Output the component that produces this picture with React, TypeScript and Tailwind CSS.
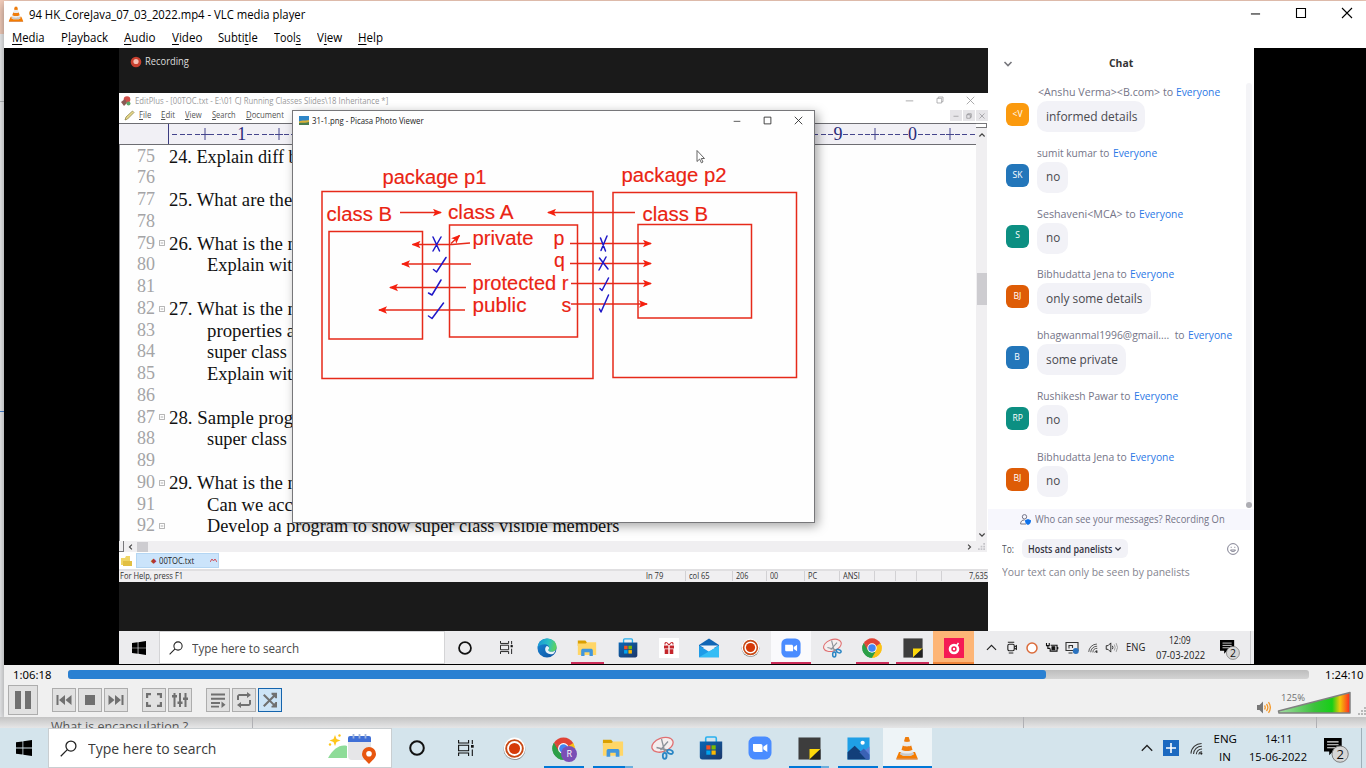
import { useLayoutEffect, useRef, useState } from "react";
import type { ReactNode } from "react";

/* Text condensed or widened to an exact advance width. */
function Fit({ w, className = "", children }: { w: number; className?: string; children: ReactNode }) {
  const ref = useRef<HTMLSpanElement>(null);
  const [scale, setScale] = useState(1);
  useLayoutEffect(() => {
    if (ref.current) setScale(w / ref.current.offsetWidth);
  }, [w]);
  return (
    <span className={`inline-block shrink-0 whitespace-pre ${className}`} style={{ width: w }}>
      <span ref={ref} className="inline-block origin-left" style={{ transform: `scaleX(${scale})` }}>
        {children}
      </span>
    </span>
  );
}

/* ---------- icons ---------- */

const Cone = ({ className }: { className: string }) => (
  <svg viewBox="0 0 24 24" className={className}>
    <path d="M4 16h16l2.700 6.500H1.300z" fill="#f57c00" />
    <path d="M1.300 22.500h21.400v1H1.300z" fill="#d35f00" />
    <path d="M10.300 1h3.400l5 17.200c-2 2.400-11.400 2.400-13.400 0z" fill="#ececec" />
    <path d="M10.300 1h3.400l1.300 4.300c-1.200.8-4.800.8-6 0z" fill="#ef7d0c" />
    <path d="M7.800 9.600c2 1.200 6.400 1.200 8.400 0l1.300 4.200c-2.600 1.700-8.400 1.700-11 0z" fill="#ef7d0c" />
    <path d="M5.900 16.300l-.6 1.900c2 2.400 11.400 2.400 13.400 0l-.6-1.900c-2.500 1.700-9.700 1.700-12.200 0z" fill="#c9c9c9" />
  </svg>
);

const WinLogo = ({ className }: { className: string }) => (
  <svg viewBox="0 0 16 16" className={className} fill="#000">
    <path d="M0 2.300l6.500-.9v6.200H0zM7.300 1.300L16 0v7.600H7.300zM0 8.400h6.500v6.200L0 13.700zM7.300 8.400H16V16l-8.700-1.300z" />
  </svg>
);

const SearchIcon = ({ className }: { className: string }) => (
  <svg viewBox="0 0 16 16" className={className} fill="none" stroke="#222" strokeWidth="1.200">
    <circle cx="10.300" cy="5.700" r="4.700" />
    <path d="M6.900 9.100L.7 15.300" />
  </svg>
);

const Ring = ({ className }: { className: string }) => (
  <svg viewBox="0 0 16 16" className={className} fill="none" stroke="#111" strokeWidth="2">
    <circle cx="8" cy="8" r="6.800" />
  </svg>
);

const TaskView = ({ className }: { className: string }) => (
  <svg viewBox="0 0 16 16" className={className} fill="none" stroke="#111" strokeWidth="1.100">
    <path d="M.6 0v3h10V0M.6 16v-3h10v3M.6 5.200h10v5.600H.6zM14.300 0v4M14.300 9.500V16" />
    <path d="M13 5h2.700v2.700H13z" fill="#111" stroke="none" />
  </svg>
);

const Edge = ({ className }: { className: string }) => (
  <svg viewBox="0 0 24 24" className={className}>
    <defs>
      <linearGradient id="edgeTop" x1="0" x2="1" y1=".3" y2=".5">
        <stop offset="0" stopColor="#1795d8" />
        <stop offset=".55" stopColor="#2bc0c4" />
        <stop offset="1" stopColor="#5fd35a" />
      </linearGradient>
      <linearGradient id="edgeLow" x1="0" x2="1" y1="0" y2="1">
        <stop offset="0" stopColor="#1b8ad8" />
        <stop offset="1" stopColor="#0c4f9e" />
      </linearGradient>
    </defs>
    <circle cx="12" cy="12" r="11.500" fill="url(#edgeLow)" />
    <path d="M.7 11C1.500 4.500 6.500.5 12.200.5 19 .5 23.500 5.200 23.500 10.500c0 3.700-2.500 6-6 6-2.800 0-4-1.200-4-2.200 0-.8 1-1.200 1-2.800 0-2.300-2-4-5-4C5 7.500 1.500 9.500.7 11z" fill="url(#edgeTop)" />
    <path d="M13.500 14.300c0 1 1.200 2.200 4 2.200 2 0 3.800-.8 4.800-1.800-.4 1.500-1.300 3-2.500 4.200-5 2-10.300-1-10-5.600.1-1.500.9-2.800 2-3.600 1.600.3 2.600 1.200 2.700 2.500 0 1-1 1.300-1 2.100z" fill="#e8f2f8" />
  </svg>
);

const Folder = ({ className }: { className: string }) => (
  <svg viewBox="0 0 24 24" className={className}>
    <path d="M1 3h9l2 2.500v4H1z" fill="#dba000" />
    <path d="M1 6.500h9.500L12.500 5H23v15.500H1z" fill="#ffd667" />
    <path d="M5 21.500V15.300C5 13.500 6 13 7.500 13h9c1.500 0 2.500.5 2.500 2.300v6.200h-4v-4.300H9v4.300z" fill="#4196dc" />
  </svg>
);

const Store = ({ className }: { className: string }) => (
  <svg viewBox="0 0 24 24" className={className}>
    <defs>
      <linearGradient id="storeBody" x1="0" x2="1" y1="0" y2="1">
        <stop offset="0" stopColor="#0a66b5" />
        <stop offset="1" stopColor="#1d3769" />
      </linearGradient>
    </defs>
    <path d="M6.700 7V2.500C6.700 1.500 7.200 1 8 1h8c.8 0 1.300.5 1.300 1.500V7" fill="none" stroke="#29b0ee" strokeWidth="1.600" />
    <path d="M.8 5.500h22.400v15.300c0 1.700-.9 2.600-2.600 2.600H3.400c-1.700 0-2.600-.9-2.600-2.600z" fill="url(#storeBody)" />
    <path d="M7.300 9.300h4.200v4.200H7.300z" fill="#f25022" />
    <path d="M12.500 9.300h4.200v4.200h-4.200z" fill="#7fba00" />
    <path d="M7.300 14.500h4.200v4.200H7.300z" fill="#00a4ef" />
    <path d="M12.500 14.500h4.200v4.200h-4.200z" fill="#ffb900" />
  </svg>
);

const Gift = ({ className }: { className: string }) => (
  <svg viewBox="0 0 20 20" className={className}>
    <path d="M0 0h20v20H0z" fill="#fff" />
    <path d="M5 7.500h4.300v3H5zM10.700 7.500H15v3h-4.300zM5.700 11.200h3.600v4.800H5.700zM10.700 11.200h3.600v4.800h-3.600z" fill="#c4252b" />
    <path d="M9.800 7C8 3.500 5.500 4 6.200 6.500M10.200 7c1.800-3.500 4.300-3 3.600-.5" fill="none" stroke="#c4252b" strokeWidth="1.200" />
  </svg>
);

const Mail = ({ className }: { className: string }) => (
  <svg viewBox="0 0 24 24" className={className}>
    <path d="M0 8.500L12 .5l12 8V12H0z" fill="#1066b5" />
    <path d="M0 9l12 7.500L24 9v14H0z" fill="#1f9ce8" />
    <path d="M24 9L0 23h24z" fill="#35bdf5" />
    <path d="M1 9h22l-11 6.500z" fill="#eef4f9" />
  </svg>
);

const Rec = ({ className }: { className: string }) => (
  <svg viewBox="0 0 24 24" className={className}>
    <circle cx="12" cy="12.500" r="11.300" fill="#777" />
    <circle cx="12" cy="11.800" r="11.200" fill="#fff" />
    <circle cx="12" cy="12" r="8.700" fill="#fff" stroke="#c84a16" strokeWidth="2" />
    <circle cx="12" cy="12" r="5.800" fill="#d63a08" />
  </svg>
);

const Zoom = ({ className }: { className: string }) => (
  <svg viewBox="0 0 24 24" className={className}>
    <rect x=".5" y=".5" width="23" height="23" rx="6.500" fill="#4a8cff" />
    <path d="M5 8h7.500c1.300 0 2 .7 2 2v6H7c-1.300 0-2-.7-2-2z" fill="#fff" />
    <path d="M15.300 10.800L19.300 8v8l-4-2.800z" fill="#fff" />
  </svg>
);

const Snip = ({ className }: { className: string }) => (
  <svg viewBox="0 0 24 24" className={className} fill="none">
    <ellipse cx="12.500" cy="8.800" rx="11" ry="6.800" transform="rotate(-20 12.500 8.800)" fill="#f4eeee" stroke="#e07072" strokeWidth="1.300" />
    <path d="M11.500 3l3.300 13M6.500 11.500l10.500 2.500M18 5.500L10.500 14" stroke="#8c9299" strokeWidth="1.300" />
    <ellipse cx="14.700" cy="19.800" rx="1.900" ry="3" stroke="#2b86c4" strokeWidth="1.800" />
    <ellipse cx="20" cy="15.800" rx="3" ry="1.900" transform="rotate(20 20 15.800)" stroke="#2b86c4" strokeWidth="1.800" />
  </svg>
);

const Chrome = ({ className }: { className: string }) => (
  <svg viewBox="0 0 24 24" className={className}>
    <path d="M12 12L1.900 6.200A11.700 11.700 0 0 1 22.100 6.200z" fill="#e04336" />
    <path d="M12 12L22.100 6.200A11.700 11.700 0 0 1 12 23.700z" fill="#fbc116" />
    <path d="M12 12V23.700A11.700 11.700 0 0 1 1.900 6.200z" fill="#2c9f47" />
    <path d="M12 6.400h10.200L17 14.800zM12 12l-5.200 2.700L1.900 6.200z" fill="#e04336" />
    <path d="M17.200 14.500L12 23.700l-2-7z" fill="#fbc116" />
    <path d="M17 9.500l5.200-3.100A11.700 11.700 0 0 1 12 23.700l5.200-9z" fill="#fbc116" />
    <path d="M7 14.800L1.900 6.200A11.700 11.700 0 0 0 12 23.700l4-7z" fill="#2c9f47" />
    <circle cx="12" cy="12" r="5.700" fill="#fff" />
    <circle cx="12" cy="12" r="4.500" fill="#4285f4" />
  </svg>
);

const Note = ({ className }: { className: string }) => (
  <svg viewBox="0 0 24 24" className={className}>
    <path d="M.5.5h23v23H.5z" fill="#3d3d3d" />
    <path d="M12 12.500h11.500L12 23.500z" fill="#fdd80a" />
    <path d="M23.500 12.500v11H12z" fill="#222" />
  </svg>
);

const RedDial = ({ className }: { className: string }) => (
  <svg viewBox="0 0 20 20" className={className}>
    <path d="M0 0h20v20H0z" fill="#f51a55" />
    <circle cx="10" cy="11" r="4" fill="none" stroke="#fff" strokeWidth="2.600" />
    <circle cx="10" cy="11" r="1.200" fill="#fff" />
    <path d="M12 8.500l2.500-3.500" stroke="#fff" strokeWidth="1.500" />
  </svg>
);

const Photo = ({ className }: { className: string }) => (
  <svg viewBox="0 0 24 24" className={className}>
    <path d="M.5.5h23v23H.5z" fill="#1f9fe6" />
    <path d="M23.500 10L15 17l8.500 6.500z" fill="#5f7fd6" />
    <path d="M.5 16L8 9l15 14.500H.5z" fill="#123f7a" />
    <path d="M13 16l4.500-4 6 6.500v5h-3.500z" fill="#3a62b5" />
    <circle cx="16.300" cy="6" r="2.200" fill="#fff" />
  </svg>
);

const ChevUp = ({ className }: { className: string }) => (
  <svg viewBox="0 0 12 8" className={className} fill="none" stroke="#222" strokeWidth="1.300">
    <path d="M.8 6.800L6 1.500l5.200 5.300" />
  </svg>
);

const ChevDown = ({ className }: { className: string }) => (
  <svg viewBox="0 0 10 8" className={className} fill="none" stroke="currentColor" strokeWidth="1.600">
    <path d="M1.500 2L5 5.500 8.500 2" />
  </svg>
);

const Wifi = ({ className }: { className: string }) => (
  <svg viewBox="0 0 14 14" className={className} fill="none" stroke="#333" strokeWidth="1.100">
    <path d="M1 12.500A11.500 11.500 0 0 1 12.500 1.500M3.800 13A8.700 8.700 0 0 1 12.800 4.500M6.800 13.200A6 6 0 0 1 13 7.500M9.500 13.500A3.500 3.500 0 0 1 13 10.500" />
    <circle cx="12.200" cy="12.500" r="1.200" fill="#222" stroke="none" />
  </svg>
);

const Notif = ({ className }: { className: string }) => (
  <svg viewBox="0 0 24 24" className={className}>
    <path d="M0 0h17v13H8.500L5 16.500V13H0z" fill="#000" />
    <path d="M3 3.700h11M3 6.500h11M3 9.300h11" stroke="#e8e8e8" strokeWidth="1" />
    <circle cx="15.500" cy="15.500" r="7.800" fill="#d6d6d6" stroke="#777" strokeWidth=".9" />
    <text x="15.500" y="20" fontSize="12.500" textAnchor="middle" fontFamily="Open Sans, sans-serif" fill="#111">2</text>
  </svg>
);

const WinControls = ({ kind, className }: { kind: "min" | "max" | "close" | "restore"; className: string }) => (
  <svg viewBox="0 0 12 12" className={className} fill="none" stroke="currentColor" strokeWidth="1.100">
    {kind === "min" && <path d="M1 6.500h10" />}
    {kind === "max" && <path d="M1.500 1.500h9v9h-9z" />}
    {kind === "close" && <path d="M1 1l10 10M11 1L1 11" />}
    {kind === "restore" && <path d="M1.500 3.500h7v7h-7zM3.500 3.500v-2h7v7h-2" />}
  </svg>
);

/* ---------- player window chrome ---------- */

const MENU: [string, string, string, number][] = [
  ["", "M", "edia", 33],
  ["P", "l", "ayback", 47],
  ["", "A", "udio", 32],
  ["", "V", "ideo", 30],
  ["Subti", "t", "le", 40],
  ["Tool", "s", "", 27],
  ["V", "i", "ew", 25],
  ["", "H", "elp", 25],
];

function TitleBar() {
  return (
    <>
      <div className="flex h-[27px] shrink-0 items-center bg-white pl-[4px] text-black">
        <Cone className="mt-[-2px] size-[16px]" />
        <Fit w={276} className="ml-[5px] text-[12px] leading-[16px]">94 HK_CoreJava_07_03_2022.mp4 - VLC media player</Fit>
        <div className="mt-[-3px] ml-auto flex items-center gap-[34px] pr-[13px]">
          <WinControls kind="min" className="size-[11px]" />
          <WinControls kind="max" className="size-[12px]" />
          <WinControls kind="close" className="size-[12px]" />
        </div>
      </div>
      <div className="flex h-[20px] shrink-0 items-center gap-[16px] bg-white pl-[8px] text-[12px] leading-[16px] text-black">
        {MENU.map(([a, u, b, w]) => (
          <Fit key={a + u + b} w={w}>
            {a}
            <span className="underline underline-offset-2">{u}</span>
            {b}
          </Fit>
        ))}
      </div>
    </>
  );
}

/* ---------- EditPlus ---------- */

const LINES: { n: number; fold?: boolean; indent?: boolean; text?: string; w?: number }[] = [
  { n: 75, text: "24. Explain diff b", w: 129 },
  { n: 76 },
  { n: 77, text: "25. What are the", w: 123 },
  { n: 78 },
  { n: 79, fold: true, text: "26. What is the n", w: 128 },
  { n: 80, indent: true, text: "Explain with", w: 95 },
  { n: 81 },
  { n: 82, fold: true, text: "27. What is the n", w: 128 },
  { n: 83, indent: true, text: "properties a", w: 88 },
  { n: 84, indent: true, text: "super class", w: 80 },
  { n: 85, indent: true, text: "Explain with", w: 95 },
  { n: 86 },
  { n: 87, fold: true, text: "28. Sample progr", w: 130 },
  { n: 88, indent: true, text: "super class", w: 80 },
  { n: 89 },
  { n: 90, fold: true, text: "29. What is the n", w: 128 },
  { n: 91, indent: true, text: "Can we acce", w: 94 },
  { n: 92, fold: true, indent: true, text: "Develop a program to show super class visible members", w: 412 },
];

/* Column marks; the stretch behind the photo window stays plain. */
const RULER = Array.from({ length: 108 }, (_, i) => {
  const c = i + 1;
  if (c > 18 && c < 87) return "-";
  return c % 10 === 0 ? String((c / 10) % 10) : c % 5 === 0 ? "+" : "-";
});

function Ruler() {
  return (
    <div className="flex h-[22px] shrink-0 overflow-hidden border-y border-[#6d6d72] bg-[#f1f0f5]">
      <div className="w-[50px] shrink-0 border-r border-[#3c3c80]" />
      <div className="flex min-w-0 flex-1 items-center overflow-hidden pl-[2px] font-['Liberation_Serif',serif] text-[18px] leading-[20px] text-[#2a2a78]">
        {RULER.map((ch, i) => (
          <span key={i} className="flex w-[7.46px] shrink-0 items-center justify-center">
            {ch === "-" && <span className="h-px w-[5px] bg-[#45458c]" />}
            {ch === "+" && (
              <svg viewBox="0 0 8 12" className="h-[12px] w-[8px] shrink-0" stroke="#45458c" strokeWidth="1">
                <path d="M0 6.500h8M4 0v12" />
              </svg>
            )}
            {ch !== "-" && ch !== "+" && <span>{ch}</span>}
          </span>
        ))}
      </div>
    </div>
  );
}

function Diagram() {
  return (
    <svg viewBox="293 131 521 391" className="block h-[391px] w-[521px]" fill="none">
      <defs>
        <marker id="tip" viewBox="0 0 9 8" refX="8" refY="4" markerWidth="9" markerHeight="8" markerUnits="userSpaceOnUse" orient="auto">
          <path d="M0 0.300L9 4 0 7.700 2 4z" fill="#f5200f" />
        </marker>
      </defs>
      <g stroke="#e62a1a" strokeWidth="1.500">
        <path d="M322 191.500h271v187H322zM329 231.500h93.500V339H329zM449.500 225h128v112h-128zM613 192.500h183.500v185H613zM638 224.500h113.500V318H638z" />
        <path d="M400 212.500h41" markerEnd="url(#tip)" />
        <path d="M635 212.500h-87" markerEnd="url(#tip)" />
        <path d="M570 243.500h81" markerEnd="url(#tip)" />
        <path d="M570 263.500h81" markerEnd="url(#tip)" />
        <path d="M571 283.500h80" markerEnd="url(#tip)" />
        <path d="M571 304h76" markerEnd="url(#tip)" />
        <path d="M470 243L452 244.500H412.500" markerEnd="url(#tip)" />
        <path d="M451 243.500l8.500-8" markerEnd="url(#tip)" />
        <path d="M471 264h-69" markerEnd="url(#tip)" />
        <path d="M466 287.500h-76" markerEnd="url(#tip)" />
        <path d="M465 310h-86" markerEnd="url(#tip)" />
      </g>
      <g stroke="#2018c8" strokeWidth="1.500" strokeLinecap="round" strokeLinejoin="round">
        <path d="M433 237l6.500 14M441 237l-8 14M433.500 269.500l3 2.500 9.500-14.500M428.500 293l3.500 2 9-15M428.500 316l3.500 2.500 11.500-15.500" />
        <path d="M600.500 238l5 13M607 236l-6 14.500M599.500 258l8.500 11M606 257l-7 13M600 288.500l2 2 6.500-12.500M599.500 309l1.500 3 7.500-17" />
      </g>
      <g fill="#ea2413" stroke="#ea2413" strokeWidth=".15" fontFamily="'Liberation Sans', sans-serif" fontSize="19.500">
        <text x="382.500" y="184" textLength="104" lengthAdjust="spacingAndGlyphs">package p1</text>
        <text x="621.500" y="181.500" textLength="105" lengthAdjust="spacingAndGlyphs">package p2</text>
        <text x="326.500" y="221" textLength="65.500" lengthAdjust="spacingAndGlyphs">class B</text>
        <text x="448" y="219.300" textLength="65.500" lengthAdjust="spacingAndGlyphs">class A</text>
        <text x="642.500" y="221" textLength="65.500" lengthAdjust="spacingAndGlyphs">class B</text>
        <text x="472.500" y="244.500" textLength="61" lengthAdjust="spacingAndGlyphs">private</text>
        <text x="553.500" y="244.500">p</text>
        <text x="554" y="267">q</text>
        <text x="472.500" y="289.500" textLength="96" lengthAdjust="spacingAndGlyphs">protected r</text>
        <text x="472.500" y="312" textLength="54" lengthAdjust="spacingAndGlyphs">public</text>
        <text x="561.500" y="312">s</text>
      </g>
      <path d="M697 150.500v11l2.600-2.400 1.800 3.700 1.600-.8-1.700-3.500h3.200z" fill="#fff" stroke="#555" strokeWidth=".9" />
    </svg>
  );
}

function PhotoViewer() {
  return (
    <div className="absolute top-[17px] left-[173px] flex h-[413px] w-[523px] flex-col border border-[#77777a] bg-[#fefefe] shadow-[3px_3px_10px_rgba(0,0,0,0.35)]">
      <div className="flex h-[20px] shrink-0 items-center pb-px pl-[6px] text-[#222]">
        <svg viewBox="0 0 10 9" className="h-[9px] w-[10px]">
          <path d="M0 0h10v9H0z" fill="#2e86c8" />
          <path d="M0 5.500C3 3.500 7 5 10 4v5H0z" fill="#d9b23a" />
          <path d="M0 7c4-1 6 .5 10-1v3H0z" fill="#4a7d50" />
        </svg>
        <Fit w={112} className="ml-[3px] text-[9px] leading-[12px]">31-1.png - Picasa Photo Viewer</Fit>
        <div className="ml-auto flex items-center gap-[22px] pr-[11px]">
          <WinControls kind="min" className="size-[8px]" />
          <WinControls kind="max" className="size-[9px]" />
          <WinControls kind="close" className="size-[9px]" />
        </div>
      </div>
      <Diagram />
    </div>
  );
}

const STATUS: [string, number, number][] = [
  ["ln 79", 17, 43],
  ["col 65", 21, 47],
  ["206", 12, 34],
  ["00", 8, 38],
  ["PC", 9, 35],
  ["ANSI", 17, 35],
  ["", 0, 21],
  ["", 0, 21],
  ["", 0, 25],
];

function EditPlus() {
  return (
    <div className="relative flex h-[489px] shrink-0 flex-col bg-white">
      <div className="flex h-[15px] shrink-0 items-center pl-[2px] text-[#9a9a9c]">
        <svg viewBox="0 0 10 10" className="size-[10px]">
          <circle cx="6" cy="3.500" r="3.300" fill="#d2504a" />
          <path d="M0 6l4-3 2 4-3 3z" fill="#8a5a55" />
          <circle cx="7.500" cy="7.500" r="2" fill="#5ea86a" />
        </svg>
        <Fit w={253} className="ml-[4px] text-[9px] leading-[12px]">EditPlus - [00TOC.txt - E:\01 CJ Running Classes Slides\18 Inheritance *]</Fit>
        <div className="mt-[-1px] ml-auto flex items-center gap-[22px] pr-[13px]">
          <WinControls kind="min" className="size-[9px]" />
          <WinControls kind="restore" className="size-[8px]" />
          <WinControls kind="close" className="size-[9px]" />
        </div>
      </div>
      <div className="flex h-[15px] shrink-0 items-center pl-[5px] text-[9px] leading-[12px] text-[#555]">
        <svg viewBox="0 0 11 11" className="size-[11px]">
          <path d="M1 10l1-3 6.500-6L10 2.500 3.500 9z" fill="#e6d98c" stroke="#877a3a" strokeWidth=".7" />
        </svg>
        <div className="mt-[-1px] flex gap-[10px] pl-[4px]">
          {([["F", "ile", 12], ["E", "dit", 14], ["V", "iew", 17], ["S", "earch", 24], ["D", "ocument", 38]] as [string, string, number][]).map(([u, r, w]) => (
            <Fit key={u} w={w}>
              <span className="underline">{u}</span>
              {r}
            </Fit>
          ))}
        </div>
        <div className="ml-auto flex gap-px text-[#77777a]">
          {(["min", "restore", "close"] as const).map((k) => (
            <span key={k} className="flex h-[11px] w-[12px] items-center justify-center bg-[#e6e5e8]">
              <WinControls kind={k} className="size-[6px]" />
            </span>
          ))}
        </div>
      </div>
      <div className="flex h-[429px] shrink-0">
        <div className="flex w-[857px] shrink-0 flex-col">
          <Ruler />
          <div className="flex-1 overflow-hidden border-l border-[#88888c] bg-[#fefefe] pt-[0.5px] font-['Liberation_Serif',serif] text-[19px] leading-[21.760px] text-[#111]">
            {LINES.map((l) => (
              <div key={l.n} className="flex h-[21.760px] items-center">
                <Fit w={18} className="ml-[17px] text-[18px] text-[#a4a4a6]">{l.n}</Fit>
                <span className="flex w-[14px] shrink-0 items-center pl-[4px]">
                  {l.fold && (
                    <svg viewBox="0 0 7 7" className="size-[6px]" fill="none" stroke="#999" strokeWidth=".9">
                      <path d="M.5.500h6v6h-6zM2 3.500h3" />
                    </svg>
                  )}
                </span>
                <span className={l.indent ? "w-[38px] shrink-0" : "w-0 shrink-0"} />
                {l.text && <Fit w={l.w ?? 100}>{l.text}</Fit>}
              </div>
            ))}
          </div>
          <div className="flex h-[11px] shrink-0 items-center bg-[#f0eff1] text-[#444]">
            <span className="h-[11px] w-[5px] border-r border-b border-[#77777a]" />
            <ChevDown className="mr-[3px] ml-[3px] h-[6px] w-[7px] rotate-90" />
            <span className="h-[10px] w-[11px] bg-[#cdccd0]" />
            <ChevDown className="mr-[3px] ml-auto h-[6px] w-[7px] -rotate-90" />
          </div>
        </div>
        <div className="flex w-[11px] flex-col items-center bg-[#f0eff1] text-[#444]">
          <span className="h-[5px] w-full border-y border-r border-[#77777a] bg-white" />
          <ChevDown className="mt-[4px] h-[6px] w-[8px] rotate-180" />
          <span className="mt-[135px] h-[32px] w-[10px] bg-[#cdccd0]" />
          <ChevDown className="mt-auto h-[6px] w-[8px]" />
          <svg viewBox="0 0 8 8" className="mt-[5px] mb-[2px] size-[7px]" fill="#c4c4c8">
            <path d="M6 0h2v2H6zM3 3h2v2H3zM6 3h2v2H6zM0 6h2v2H0zM3 6h2v2H3zM6 6h2v2H6z" />
          </svg>
        </div>
      </div>
      <div className="flex h-[17px] shrink-0 items-start pt-px text-[9px] leading-[12px]">
        <svg viewBox="0 0 11 11" className="mt-[2px] ml-[2px] size-[11px]">
          <path d="M0 3h4l1-2h4v9H0z" fill="#efd565" />
          <path d="M2 6h9v5H2z" fill="#e2bf42" />
        </svg>
        <div className="ml-[4px] flex h-[15px] w-[83px] items-center border border-[#b4d6f3] bg-[#cbe4fb] pl-[14px] text-[#222]">
          <span className="text-[7px] text-[#b2382c]">◆</span>
          <Fit w={35} className="ml-[3px]">00TOC.txt</Fit>
          <svg viewBox="0 0 7 5" className="ml-[16px] h-[5px] w-[7px]" stroke="#d0505a" fill="none">
            <path d="M0 4l2-3 1.500 2L5 1l2 3" />
          </svg>
        </div>
      </div>
      <div className="flex h-[13px] shrink-0 items-center border-t-2 border-[#e0dfe1] bg-[#f0eff1] pb-px pl-px text-[9px] leading-[10px] text-[#333]">
        <Fit w={63}>For Help, press F1</Fit>
        <span className="w-[460px]" />
        {STATUS.map(([t, w, cell], i) => (
          <span key={i} className="flex h-full shrink-0 items-center border-r border-[#d2d1d4] pl-[3px]" style={{ width: cell }}>
            {t && <Fit w={w}>{t}</Fit>}
          </span>
        ))}
        <Fit w={19} className="ml-auto">7,635</Fit>
      </div>
      <PhotoViewer />
    </div>
  );
}

/* ---------- chat ---------- */

const CHAT: { av: string; c: string; from: string; fw: number; msg: string; mw: number }[] = [
  { av: "<V", c: "bg-[#fb9a0e]", from: "<Anshu Verma><B.com> to", fw: 135, msg: "informed details", mw: 91 },
  { av: "SK", c: "bg-[#2376ba]", from: "sumit kumar to", fw: 72.500, msg: "no", mw: 14 },
  { av: "S", c: "bg-[#0c8f82]", from: "Seshaveni<MCA> to", fw: 99, msg: "no", mw: 14 },
  { av: "BJ", c: "bg-[#de5c06]", from: "Bibhudatta Jena to", fw: 90, msg: "only some details", mw: 97 },
  { av: "B", c: "bg-[#2376ba]", from: "bhagwanmal1996@gmail....  to", fw: 148, msg: "some private", mw: 72 },
  { av: "RP", c: "bg-[#0c8f82]", from: "Rushikesh Pawar to", fw: 93.500, msg: "no", mw: 14 },
  { av: "BJ", c: "bg-[#de5c06]", from: "Bibhudatta Jena to", fw: 90, msg: "no", mw: 14 },
];

function Chat() {
  return (
    <div className="flex w-[266px] shrink-0 flex-col bg-white">
      <div className="flex h-[36px] shrink-0 items-center text-[#77777d]">
        <ChevDown className="mt-[-4px] ml-[15px] h-[8px] w-[10px]" />
        <Fit w={24.500} className="mt-[-6px] ml-[96px] text-[11px] leading-[16px] font-bold text-[#333]">Chat</Fit>
      </div>
      <div className="flex h-[425px] shrink-0">
        <div className="flex w-[258px] shrink-0 flex-col">
          {CHAT.map((m, i) => (
            <div key={i} className="flex h-[60.750px] shrink-0 pl-[18px]">
              <span className={`mt-[19px] flex size-[23px] shrink-0 items-center justify-center rounded-[6px] text-[9.500px] text-white ${m.c}`}>
                <span className="origin-center scale-x-90 pb-px">{m.av}</span>
              </span>
              <div className="ml-[8px] flex flex-col items-start">
                <div className="flex h-[17px] items-center gap-[3px] pb-px text-[10.500px] leading-[14px] text-[#747487]">
                  <Fit w={m.fw} className={i === 0 ? "ml-px" : ""}>{m.from}</Fit>
                  <Fit w={44} className="text-[#2b77e6]">Everyone</Fit>
                </div>
                <div className="flex h-[31px] items-center rounded-[10px] bg-[#f2f2f7] px-[8.500px] text-[12.500px] leading-[16px] text-[#4a4a50]">
                  <Fit w={m.mw}>{m.msg}</Fit>
                </div>
              </div>
            </div>
          ))}
        </div>
        <div className="mt-[-1px] flex h-[425px] w-[6px] flex-col justify-end rounded-full bg-[#f4f4f7]">
          <span className="size-[6px] rounded-full bg-[#adadb3]" />
        </div>
      </div>
      <div className="flex h-[21px] shrink-0 items-center bg-[#f7f7fd] pb-px pl-[32px] text-[10.500px] leading-[14px] text-[#747487]">
        <svg viewBox="0 0 11 11" className="mt-px size-[11px]" fill="none" stroke="#747487" strokeWidth="1">
          <circle cx="4.500" cy="2.800" r="2.200" />
          <path d="M6 10H.600c0-3 1.500-4 4-4" />
          <path d="M8 5l3 1.200c0 2.500-1 4-3 4.800-2-.8-3-2.300-3-4.800z" fill="#0e71eb" stroke="none" />
        </svg>
        <Fit w={190} className="ml-[4px]">Who can see your messages? Recording On</Fit>
      </div>
      <div className="mt-[9px] flex h-[19px] shrink-0 items-center pl-[14px] text-[10.500px] leading-[14px]">
        <Fit w={12} className="text-[#55555c]">To:</Fit>
        <div className="ml-[8px] flex h-[19px] w-[106px] items-center rounded-[6px] bg-[#f2f2f7] pl-[6px] text-[#333340]">
          <Fit w={84} className="text-[10px] font-semibold">Hosts and panelists</Fit>
          <ChevDown className="ml-[2px] h-[6px] w-[8px]" />
        </div>
        <svg viewBox="0 0 12 12" className="ml-[99px] size-[12px]" fill="none" stroke="#747487" strokeWidth=".9">
          <circle cx="6" cy="6" r="5.400" />
          <path d="M3.500 7c.6 2 4.400 2 5 0z" />
          <path d="M4.200 3.800v1M7.800 3.800v1" />
        </svg>
      </div>
      <div className="pt-[7px] pl-[14px] text-[10.500px] leading-[14px] text-[#85858f]">
        <Fit w={188}>Your text can only be seen by panelists</Fit>
      </div>
    </div>
  );
}

/* ---------- recorded desktop's taskbar ---------- */

function InnerTaskbar() {
  const cells: { el: ReactNode; cls?: string; bar?: string }[] = [
    { el: <Ring className="size-[14px]" /> },
    { el: <TaskView className="size-[13px]" /> },
    { el: <Edge className="size-[20px]" /> },
    { el: <Folder className="size-[20px]" />, bar: "w-[33px] bg-[#cc2c58]" },
    { el: <Store className="size-[20px]" /> },
    { el: <Gift className="size-[20px]" /> },
    { el: <Mail className="size-[20px]" /> },
    { el: <Rec className="size-[19px]" /> },
    { el: <Zoom className="size-[20px]" />, cls: "bg-[#fafafc]", bar: "w-full bg-[#cc2c58]" },
    { el: <Snip className="size-[20px]" /> },
    { el: <Chrome className="size-[20px]" />, bar: "w-[33px] bg-[#cc2c58]" },
    { el: <Note className="size-[20px]" />, bar: "w-[33px] bg-[#cc2c58]" },
    { el: <RedDial className="size-[20px]" />, cls: "bg-[#fdb576]", bar: "w-full bg-[#f0863c]" },
  ];
  return (
    <div className="flex h-[33px] shrink-0 bg-[#ececee]">
      <div className="flex w-[40px] shrink-0 items-center justify-center">
        <WinLogo className="size-[14px]" />
      </div>
      <div className="flex w-[286px] shrink-0 items-center border border-[#d4d4d6] bg-white pl-[9px]">
        <SearchIcon className="size-[14px]" />
        <Fit w={107} className="mt-[2px] ml-[9px] text-[12.500px] leading-[16px] text-[#4a4a4a]">Type here to search</Fit>
      </div>
      {cells.map((c, i) => (
        <div key={i} className={`flex w-[40.700px] shrink-0 flex-col items-center ${c.cls ?? ""}`}>
          <span className="flex h-[31px] shrink-0 items-center pt-[2px]">{c.el}</span>
          {c.bar && <span className={`h-[2px] ${c.bar}`} />}
        </div>
      ))}
      <div className="flex flex-1 items-center pl-[12px]">
        <ChevUp className="h-[7px] w-[11px]" />
        <svg viewBox="0 0 12 14" className="ml-[9px] h-[13px] w-[11px]" fill="none" stroke="#222" strokeWidth="1.200">
          <rect x="2" y="3.500" width="7" height="7" rx="1.500" />
          <path d="M9 6.500l2.500-1.500v4L9 7.500M2 1.200h7M3 13h5" />
        </svg>
        <svg viewBox="0 0 12 12" className="ml-[9px] size-[12px]">
          <circle cx="6" cy="6" r="5" fill="#fff" stroke="#db6b3a" strokeWidth="1.500" />
        </svg>
        <svg viewBox="0 0 14 12" className="ml-[7px] h-[11px] w-[14px]" fill="none" stroke="#111" strokeWidth="1.200">
          <path d="M5.500 3.500h7v6.500H5V7M1 1v3h3V1M2.500 4v3H5M13.300 5.500v2.500" />
          <path d="M7 5.200h3v3.300H7z" fill="#111" />
        </svg>
        <svg viewBox="0 0 14 13" className="ml-[6px] h-[13px] w-[14px]" fill="none" stroke="#333" strokeWidth="1.100">
          <path d="M1 1.500h12v8H1zM3.500 12h4M4 7.500V4.500h3M7.500 4v3" />
          <circle cx="10.800" cy="10" r="3" fill="#2a72bf" stroke="none" />
        </svg>
        <Wifi className="ml-[9px] size-[10px]" />
        <svg viewBox="0 0 14 12" className="ml-[7px] h-[11px] w-[14px]" fill="none" stroke="#222" strokeWidth="1">
          <path d="M.7 4h2l3-3v10l-3-3h-2zM7.500 4.200q1 1.800 0 3.600" />
          <path d="M9.500 2.700q2 3.300 0 6.600M11.500 1.200q3 4.800 0 9.600" stroke="#999" />
        </svg>
        <Fit w={19} className="ml-[7px] text-[10.500px] text-[#222]">ENG</Fit>
        <div className="ml-[11px] flex w-[49px] flex-col items-center text-[10px] leading-[15px] text-[#222]">
          <Fit w={22}>12:09</Fit>
          <Fit w={49}>07-03-2022</Fit>
        </div>
        <Notif className="mt-[5px] ml-[15px] size-[20px]" />
        <span className="mr-[3px] ml-auto h-full w-px bg-[#c8c8ca]" />
      </div>
    </div>
  );
}

/* ---------- transport controls ---------- */

function Btn({ children, on, gap = "ml-[2px]" }: { children: ReactNode; on?: boolean; gap?: string }) {
  return (
    <span className={`flex size-[24px] shrink-0 items-center justify-center border ${gap} ${on ? "border-[#1464ad] bg-[#cce4f7]" : "border-[#adadad] bg-[#e1e1e1]"}`}>
      <svg viewBox="0 0 16 16" className="size-[16px]" fill="#707070" stroke="none">
        {children}
      </svg>
    </span>
  );
}

function Controls() {
  return (
    <div className="flex h-[52px] shrink-0 flex-col bg-[#f0f0f0] text-black">
      <div className="flex h-[20px] shrink-0 items-center pl-[9px] text-[11px] leading-[14px]">
        <Fit w={38} className="font-['Noto_Sans',sans-serif]">1:06:18</Fit>
        <div className="mt-[-2px] ml-[17px] h-[9px] w-[1241px] overflow-hidden rounded-[3px] bg-linear-to-b from-[#bdbdbd] to-[#d4d4d4]">
          <div className="h-full w-[978px] rounded-r-[3px] bg-[#2a80d2]" />
        </div>
        <Fit w={38} className="ml-[16px] font-['Noto_Sans',sans-serif]">1:24:10</Fit>
      </div>
      <div className="flex h-[30px] items-center pl-[4px]">
        <span className="flex size-[30px] items-center justify-center gap-[4px] border border-[#adadad] bg-[#e1e1e1]">
          <span className="h-[18px] w-[6px] bg-[#707070]" />
          <span className="h-[18px] w-[6px] bg-[#707070]" />
        </span>
        <Btn gap="ml-[14px]">
          <path d="M.5 3h2v10h-2zM9 3v10L3 8zM15.500 3v10l-6-5z" />
        </Btn>
        <Btn>
          <path d="M3 3h10v10H3z" />
        </Btn>
        <Btn>
          <path d="M13.500 3h2v10h-2zM7 3v10l6-5zM.5 3v10l6-5z" />
        </Btn>
        <Btn gap="ml-[14px]">
          <path d="M0 1h5v2.200H2.200V6H0zM11 1h5v5h-2.200V3.200H11zM0 10h2.200v2.800H5V15H0zM13.800 10H16v5h-5v-2.200h2.800z" />
        </Btn>
        <Btn>
          <path d="M1.500 1h2v14h-2zM0 3h5v2.500H0zM7 1h2v14H7zM5.500 9.500h5V12h-5zM12.500 1h2v14h-2zM11 5.500h5V8h-5z" />
        </Btn>
        <Btn gap="ml-[14px]">
          <path d="M1 1.500h14v2H1zM1 5.800h14v2H1zM1 10h9v2H1zM1 13.800h8v1.700H1zM11.500 9.500v6.500l4-3.200z" />
        </Btn>
        <Btn>
          <path d="M1 8V3.800l1.800-1.800H11V0l4 3-4 3V4H3v4zM15 8v4.200L13.200 14H5v2l-4-3 4-3v2h8V8z" />
        </Btn>
        <Btn on>
          <path d="M1 3.500L2.500 2l9.700 9.700 1.300-1.700H15v5.500H9.500V14l1.500-.8zM9.500.8H15v5.500h-1.500l-1-1.300L2.500 15 1 13.500 11 3.500 9.500 2.500z" />
        </Btn>
        <div className="ml-auto flex h-full items-end">
          <svg viewBox="0 0 15 13" className="mb-px h-[13px] w-[15px]" fill="none">
            <path d="M1 4h2.500L7 .5v12L3.500 9H1z" fill="#777" />
            <path d="M8.500 4.500q1.500 2 0 4M10.500 3q2.700 3.500 0 7M12.500 1.200q3.700 5.300 0 10.600" stroke="#f59a2c" strokeWidth="1.300" />
          </svg>
          <div className="ml-[6px] flex h-[24px] w-[74px] flex-col">
            <svg viewBox="0 0 74 24" className="size-full">
              <defs>
                <linearGradient id="vol">
                  <stop offset="0" stopColor="#a5dca5" />
                  <stop offset=".5" stopColor="#3cc23c" />
                  <stop offset=".75" stopColor="#17cf17" />
                  <stop offset=".86" stopColor="#f2c80a" />
                  <stop offset=".98" stopColor="#ff3b1e" />
                </linearGradient>
              </defs>
              <path d="M1.500 20L73 1.500V22H2z" fill="url(#vol)" stroke="#808080" strokeWidth="1.500" strokeLinejoin="round" />
              <text x="4" y="10" fontSize="9.500" textLength="24" lengthAdjust="spacingAndGlyphs" fontFamily="Open Sans, sans-serif" fill="#707070">125%</text>
            </svg>
          </div>
          <svg viewBox="0 0 8 8" className="ml-[7px] size-[8px]" fill="#b8b8b8">
            <path d="M6 0h2v2H6zM3 3h2v2H3zM6 3h2v2H6zM0 6h2v2H0zM3 6h2v2H3zM6 6h2v2H6z" />
          </svg>
        </div>
      </div>
    </div>
  );
}

/* ---------- host taskbar ---------- */

const SearchArt = () => (
  <svg viewBox="0 0 50 32" className="h-[32px] w-[50px]">
    <path d="M0 26C5 17 12 12 19 14v12z" fill="#8edc98" />
    <path d="M7 3l1.500 4L12.500 8.500 8.500 10 7 14l-1.500-4L1.500 8.500l4-1.500z" fill="#ffc61a" />
    <circle cx="2" cy="12.500" r="1.200" fill="#ffc61a" />
    <circle cx="11.500" cy="3.500" r="1.200" fill="#ffc61a" />
    <path d="M20 8h23v17q0 3-3 3H24q-4 0-4-4z" fill="#e6e6e8" />
    <path d="M20 10V6q0-2 2-2h19q2 0 2 2v4z" fill="#3f6fd6" />
    <path d="M25.500 2v4.500M31.500 2v4.500M37.500 2v4.500" stroke="#9fb4dc" strokeWidth="1.800" />
    <path d="M41 15a7 7 0 0 1 7 7c0 4-4 6.500-7 10-3-3.500-7-6-7-10a7 7 0 0 1 7-7z" fill="#e8560e" />
    <circle cx="41" cy="21.800" r="2.800" fill="#fff" />
  </svg>
);

function HostTaskbar() {
  const cells: { el: ReactNode; cls?: string; bar?: string; tail?: boolean }[] = [
    { el: <Ring className="size-[16px]" /> },
    { el: <TaskView className="size-[16px]" /> },
    { el: <Rec className="size-[23px]" /> },
    {
      el: (
        <span className="relative">
          <Chrome className="size-[23px]" />
          <span className="absolute top-[9px] left-[9px] flex size-[16px] items-center justify-center rounded-full bg-[#7a4fb5] text-[9px] text-white">R</span>
        </span>
      ),
      bar: "w-[40px]",
    },
    { el: <Folder className="size-[22px]" />, bar: "w-[32px]", tail: true },
    { el: <Snip className="size-[24px]" /> },
    { el: <Store className="size-[24px]" /> },
    { el: <Zoom className="size-[24px]" /> },
    { el: <Note className="size-[23px]" />, bar: "w-[32px]", tail: true },
    { el: <Photo className="size-[23px]" />, bar: "w-[40px]" },
    { el: <Cone className="size-[24px]" />, cls: "bg-[#eef4f7]", bar: "w-full" },
  ];
  return (
    <div className="flex h-[40px] shrink-0 bg-[#d4e4ec] text-black">
      <div className="flex w-[48px] shrink-0 items-center justify-center">
        <WinLogo className="size-[16px]" />
      </div>
      <div className="flex w-[344px] shrink-0 items-center border border-[#c9ced1] bg-white pl-[11px]">
        <SearchIcon className="size-[17px]" />
        <Fit w={128} className="mt-[2px] ml-[11px] text-[14.500px] leading-[18px] text-[#3a3a3a]">Type here to search</Fit>
        <span className="mr-[13px] ml-auto">
          <SearchArt />
        </span>
      </div>
      {cells.map((c, i) => (
        <div key={i} className={`flex w-[49.100px] shrink-0 flex-col items-center ${c.cls ?? ""}`}>
          <span className="flex h-[38px] shrink-0 items-center pt-[2px]">{c.el}</span>
          {c.bar && (
            <span className="flex h-[2px] w-full justify-center">
              <span className={`h-[2px] bg-[#0078d7] ${c.bar}`} />
              {c.tail && <span className="h-[2px] w-[8px] bg-[#6aaede]" />}
            </span>
          )}
        </div>
      ))}
      <div className="flex flex-1 items-center">
        <ChevUp className="ml-[209px] h-[8px] w-[12px]" />
        <svg viewBox="0 0 16 16" className="ml-[10px] size-[16px]">
          <path d="M0 0h16v16H0z" fill="#1c69c0" />
          <path d="M8 3v10M3 8h10" stroke="#fff" strokeWidth="1.600" />
        </svg>
        <Wifi className="ml-[11px] size-[13px]" />
        <div className="mt-[-1px] ml-[10px] flex w-[24px] flex-col items-center text-[11.500px] leading-[17.500px]">
          <Fit w={23}>ENG</Fit>
          <Fit w={12}>IN</Fit>
        </div>
        <div className="mt-[-1px] ml-[12px] flex w-[58px] flex-col items-center text-[11.500px] leading-[17.500px]">
          <Fit w={27}>14:11</Fit>
          <Fit w={58}>15-06-2022</Fit>
        </div>
        <Notif className="mt-[5px] ml-[17px] size-[25px]" />
        <span className="mr-[4px] ml-auto h-full w-px bg-[#9fb0b9]" />
      </div>
    </div>
  );
}

export default function App() {
  return (
    <div className="flex h-[768px] w-[1366px] flex-col overflow-hidden bg-[#ededee] font-['Open_Sans','Noto_Sans',sans-serif]">
      <div className="h-px shrink-0 bg-[#f3cdbb]" />
      <div className="flex h-[716px] shrink-0">
        <div className="flex w-[4px] shrink-0 flex-col bg-[#eeeff1]">
          <span className="h-[33px] bg-[#f3cdbb]" />
          <span className="h-[68px] border-b border-[#b9bcc0]" />
          <span className="h-[310px] border-b border-[#4a86d8]" />
        </div>
        <div className="flex flex-1 flex-col shadow-[0_3px_9px_rgba(0,0,0,0.4)]">
          <TitleBar />
          <div className="flex h-[617px] shrink-0 justify-center bg-black pr-[112px] pl-[115px]">
            <div className="flex h-[616px] w-[1135px] shrink-0 flex-col">
              <div className="flex h-[583px] shrink-0">
                <div className="flex w-[869px] shrink-0 flex-col bg-[#1a1a1a]">
                  <div className="flex h-[45px] shrink-0 items-start pt-[7px] pl-[11px]">
                    <svg viewBox="0 0 12 12" className="mt-px size-[12px]">
                      <circle cx="6" cy="6" r="5.300" fill="#c8402f" />
                      <circle cx="6" cy="5.500" r="2.600" fill="#f6c0b4" />
                    </svg>
                    <Fit w={44} className="ml-[3px] text-[10px] leading-[13px] text-[#dcdcdc]">Recording</Fit>
                  </div>
                  <EditPlus />
                </div>
                <Chat />
              </div>
              <InnerTaskbar />
            </div>
          </div>
          <Controls />
        </div>
      </div>
      <div className="flex h-[11px] shrink-0 overflow-hidden bg-linear-to-b from-[#c4c4c4] to-[#e6e6e7] pl-[51px] text-[12px] leading-[16px] text-[#555]">
        <span className="flex w-[202px] border-r border-[#b0b0b4] pt-[2px]">
          <Fit w={137}>What is encapsulation ?</Fit>
        </span>
        <span className="w-[771px] border-r border-[#b0b0b4]" />
        <span className="w-[293px] border-r border-[#b0b0b4]" />
      </div>
      <HostTaskbar />
    </div>
  );
}
